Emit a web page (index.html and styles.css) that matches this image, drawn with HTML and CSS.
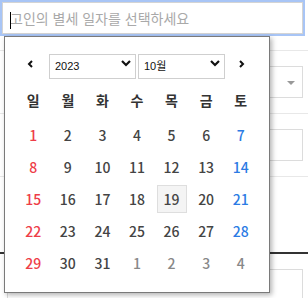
FILE: index.html
```html
<!DOCTYPE html>
<html lang="ko">

<head>
    <meta charset="UTF-8">
    <meta name="viewport" content="width=device-width, initial-scale=1.0">
    <title>별세 일자 선택</title>
    <link rel="stylesheet" href="styles.css">
</head>

<body>
    <div class="form">
        <div class="date-field">
            <input type="text" class="date-input" placeholder="고인의 별세 일자를 선택하세요">
            <span class="caret"></span>
        </div>
        <div class="row first">
            <div class="box select-box"><span class="tri"></span></div>
        </div>
        <div class="row">
            <div class="box"></div>
        </div>
        <div class="row spacer"></div>
        <div class="row dark">
            <div class="box"></div>
        </div>
    </div>

    <!-- 달력 팝업 -->
    <div class="datepicker">
        <div class="dp-nav">
            <button class="nav-btn prev">
                <svg width="6" height="8" viewBox="0 0 6 8"><polyline points="5,1 2,4 5,7" fill="none" stroke="#111" stroke-width="2"/></svg>
            </button>
            <div class="dp-select year">
                <select><option>2023</option></select>
                <svg class="chev" width="10" height="7" viewBox="0 0 10 7"><polyline points="1,1 5,5 9,1" fill="none" stroke="#111" stroke-width="2.2"/></svg>
            </div>
            <div class="dp-select month">
                <select><option>10월</option></select>
                <svg class="chev" width="10" height="7" viewBox="0 0 10 7"><polyline points="1,1 5,5 9,1" fill="none" stroke="#111" stroke-width="2.2"/></svg>
            </div>
            <button class="nav-btn next">
                <svg width="6" height="8" viewBox="0 0 6 8"><polyline points="1,1 4,4 1,7" fill="none" stroke="#111" stroke-width="2"/></svg>
            </button>
        </div>

        <div class="dp-week">
            <span>일</span><span>월</span><span>화</span><span>수</span><span>목</span><span>금</span><span>토</span>
        </div>

        <div class="dp-days" id="days"></div>
    </div>

    <script>
        // 2023년 10월 달력 그리기
        function renderDays() {
            let box = document.getElementById('days');
            let html = '';
            for (let i = 0; i < 35; i++) {
                let d = i + 1;
                let cls = 'day';
                if (d > 31) { d = d - 31; cls += ' other'; }
                else if (i % 7 === 0) cls += ' sun';
                else if (i % 7 === 6) cls += ' sat';
                if (d === 19 && i < 31) cls += ' today';
                html += `<div class="cell"><span class="${cls}">${d}</span></div>`;
            }
            box.innerHTML = html;
        }

        renderDays();
    </script>
</body>

</html>
```

FILE: styles.css
```css
html,
body {
    overflow: hidden;
}

body {
    margin: 0;
    font-family: 'Noto Sans CJK KR', 'Noto Sans', sans-serif;
    background: #fff;
    color: #444;
    width: 308px;
    height: 298px;
}

.form {
    width: 308px;
    height: 298px;
    overflow: hidden;
}

.date-field {
    position: relative;
    padding: 2px 5px 2px 2px;
}

.date-input {
    display: block;
    box-sizing: border-box;
    width: 100%;
    height: 32px;
    margin: 0;
    padding: 0 0 0 7px;
    border: 1px solid #d4d4d4;
    box-shadow: 0 0 0 2px #a8c5f6;
    outline: none;
    font-family: 'Noto Sans CJK KR', sans-serif;
    font-size: 14px;
    color: #333;
    caret-color: transparent;
}

.date-input::placeholder {
    color: #a9a9a9;
}

.caret {
    position: absolute;
    left: 10px;
    top: 12px;
    width: 1px;
    height: 17px;
    background: #000;
}

.row {
    border-top: 1px solid #e8e8e8;
    padding: 15px 5px 15px 7px;
}

.row.first {
    margin-top: 14px;
}

.row.spacer {
    height: 45px;
}

.row.dark {
    border-top: 2px solid #333;
    padding-top: 15px;
}

.box {
    position: relative;
    height: 32px;
    box-sizing: border-box;
    border: 1px solid #dcdcdc;
}

.tri {
    position: absolute;
    right: 7px;
    top: 14px;
    border-left: 4px solid transparent;
    border-right: 4px solid transparent;
    border-top: 4px solid #999;
}

/* 달력 팝업 */
.datepicker {
    position: absolute;
    left: 4px;
    top: 36px;
    width: 266px;
    height: 257px;
    box-sizing: border-box;
    padding: 14px 11px 0;
    background: #fff;
    border: 1px solid #7a7a7a;
    box-shadow: 2px 2px 5px rgba(0, 0, 0, 0.3);
}

.dp-nav {
    display: flex;
    align-items: center;
    height: 25px;
}

.nav-btn {
    display: flex;
    align-items: center;
    justify-content: center;
    height: 25px;
    padding: 0;
    border: none;
    background: none;
}

.nav-btn.prev {
    width: 28px;
}

.nav-btn.next {
    width: 24px;
    margin-left: 5px;
}

.dp-select {
    position: relative;
    width: 87px;
    height: 25px;
}

.dp-select.year {
    margin-left: 5px;
}

.dp-select.month {
    margin-left: 2px;
}

.dp-select select {
    appearance: none;
    width: 100%;
    height: 100%;
    margin: 0;
    padding: 0 0 0 5px;
    border: 1px solid #cfcfcf;
    border-radius: 0;
    background: #fff;
    font-family: 'Liberation Sans', 'Noto Sans CJK KR', sans-serif;
    font-size: 11px;
    color: #111;
}

.chev {
    position: absolute;
    right: 5px;
    top: 9px;
    pointer-events: none;
}

.dp-week {
    display: grid;
    grid-template-columns: repeat(7, 1fr);
    margin-top: 10px;
    height: 28px;
    line-height: 28px;
    text-align: center;
    font-size: 14px;
    font-weight: bold;
    color: #333;
}

.dp-days {
    display: grid;
    grid-template-columns: repeat(7, 1fr);
    grid-auto-rows: 32px;
    margin-top: 5px;
}

.cell {
    display: flex;
    align-items: center;
    justify-content: center;
}

.day {
    display: block;
    box-sizing: border-box;
    width: 30px;
    height: 28px;
    line-height: 26px;
    text-align: center;
    font-size: 14px;
    font-weight: 500;
    color: #444;
    border: 1px solid transparent;
}

.day.sun {
    color: #ee3d48;
}

.day.sat {
    color: #2b7be4;
}

.day.other {
    color: #888;
}

.day.today {
    background: #f4f4f4;
    border-color: #dedede;
}
```
